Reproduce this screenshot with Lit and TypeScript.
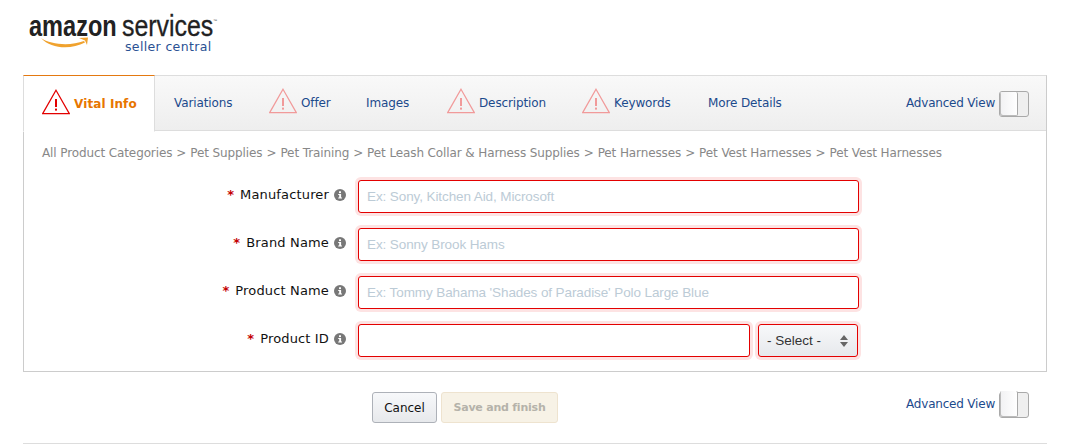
import { LitElement, html, css, svg } from "lit";
import { customElement } from "lit/decorators.js";

const tri = (active: boolean) => html`<svg class="tri" width="28" height="26" viewBox="0 0 28 26">
  ${svg`<path d="M14 1.2 L27.3 24.6 H0.7 Z" fill="#fff" fill-opacity="${active ? 1 : 0}" stroke="${active ? "#e30000" : "#f19a9a"}" stroke-width="1.2" stroke-linejoin="miter"/>
  <rect x="13" y="10" width="2" height="8" fill="${active ? "#e30000" : "#f19a9a"}"/>
  <rect x="13" y="19.6" width="2" height="2" fill="${active ? "#e30000" : "#f19a9a"}"/>`}
</svg>`;

const info = html`<svg class="info" width="12" height="12" viewBox="0 0 12 12">
  <circle cx="6" cy="6" r="6" fill="#777"/>
  <rect x="5" y="2.3" width="2" height="1.8" fill="#fff"/>
  <path d="M4.2 5h2.9v3.6h.9v1H4.2v-1h1V6h-1z" fill="#fff"/>
</svg>`;

const toggle = html`<span class="toggle"><span class="knob"></span></span>`;

const tabs: [string, boolean, number][] = [
  ["Variations", false, 58],
  ["Offer", true, 28],
  ["Images", false, 44],
  ["Description", true, 66],
  ["Keywords", true, 57],
  ["More Details", false, 73],
];

const crumbs = [
  "All Product Categories",
  "Pet Supplies",
  "Pet Training",
  "Pet Leash Collar & Harness Supplies",
  "Pet Harnesses",
  "Pet Vest Harnesses",
  "Pet Vest Harnesses",
];

@customElement("app-root")
export class AppRoot extends LitElement {
  static styles = css`
    :host {
      display: block;
      width: 1070px;
      height: 444px;
      overflow: hidden;
      background: #fff;
      font-family: "DejaVu Sans", Verdana, sans-serif;
      font-size: 12px;
      box-sizing: border-box;
      padding: 0 23px;
    }
    * { box-sizing: border-box; }
    .logo {
      position: relative;
      height: 75px;
      padding: 11px 0 0 6px;
      width: 200px;
    }
    .logo-top {
      display: flex;
      align-items: baseline;
      height: 30px;
      color: #222;
      font-family: "Liberation Sans", Arial, sans-serif;
      font-size: 30px;
      line-height: 30px;
    }
    .amazon {
      display: inline-block;
      width: 93px;
      font-weight: 700;
      white-space: nowrap;
      transform: scaleX(0.785);
      transform-origin: left;
    }
    .services {
      display: inline-block;
      width: 91px;
      white-space: nowrap;
      transform: scaleX(0.83);
      transform-origin: left;
      -webkit-text-stroke: 0.3px #222;
    }
    .tm { position: absolute; left: 190px; top: 18px; font-size: 4px; color: #444; font-family: "Liberation Sans", sans-serif; }
    .central {
      padding-left: 96px;
      color: #2a5193;
      font-family: "DejaVu Sans", sans-serif;
      font-size: 12.5px;
      line-height: 12px;
      letter-spacing: 0.35px;
      white-space: nowrap;
    }
    .arrow { position: absolute; left: 18px; top: 36px; }
    .panel {
      border: 1px solid #ccc;
      border-top-color: #ddd;
      height: 297px;
    }
    .bar {
      display: flex;
      align-items: center;
      height: 56px;
      margin-top: -1px;
      margin-left: -1px;
      border-top: 1px solid #ddd;
      border-bottom: 1px solid #ddd;
      background: linear-gradient(#f9f9f9, #eee);
      padding-right: 17px;
    }
    .bar .toggle { margin-top: 2px; }
    .tab {
      display: flex;
      align-items: center;
      gap: 4px;
      padding: 0 18.5px;
      color: #1c4a8c;
      white-space: nowrap;
      letter-spacing: -0.12px;
    }
    .tab .tri { flex: none; margin: -4px 0 0; }
    .tab.active {
      align-self: stretch;
      height: 57px;
      margin: -1px 0.5px -1px 0;
      background: #fff;
      width: 132px;
      padding: 0 0 0 18px;
      color: #e77600;
      font-weight: 700;
      letter-spacing: 0.1px;
      border-top: 1px solid #e47911;
      border-left: 1px solid #ddd;
      border-right: 1px solid #ddd;
      border-bottom: 1px solid #fff;
    }
    .spacer { flex: 1; }
    .adv { display: flex; align-items: center; gap: 4px; color: #1c4a8c; white-space: nowrap; letter-spacing: -0.2px; }
    .toggle {
      display: inline-block;
      width: 30px;
      height: 26px;
      border: 1px solid #a9a9a9;
      border-radius: 3px;
      background: #efefef;
      position: relative;
    }
    .knob {
      position: absolute;
      left: 0; top: 0; bottom: 0;
      width: 18px;
      background: linear-gradient(90deg, #f1f1f3, #fff);
      border-right: 1px solid #a9a9a9;
      border-radius: 2px;
      box-shadow: inset 1px -1px 0 #bbb;
    }
    .crumbs {
      padding: 0 0 0 18px;
      height: 43px;
      display: flex;
      align-items: center;
      color: #888;
      gap: 4px;
      white-space: nowrap;
      letter-spacing: -0.11px;
    }
    .form { display: flex; flex-direction: column; gap: 15px; padding-top: 6px; }
    .row { display: flex; align-items: center; height: 33px; }
    .label-wrap { display: flex; align-items: center; width: 322px; }
    .label {
      width: 305px;
      display: flex;
      justify-content: flex-end;
      gap: 6px;
      color: #111;
      font-size: 13px;
      letter-spacing: 0.15px;
      white-space: nowrap;
      margin-top: -4px;
    }
    .star { color: #c40000; font-weight: 700; }
    .info { margin: -3px 0 0 5px; flex: none; }
    .field {
      margin-left: 12px;
      width: 501px;
      height: 33px;
      border: 1px solid #e30000;
      border-radius: 3px;
      box-shadow: 0 0 0 3px #fde3e3;
      background: #fff;
      color: #bccbd6;
      font-family: "Liberation Sans", Arial, sans-serif;
      font-size: 13.5px;
      letter-spacing: -0.1px;
      line-height: 31px;
      padding: 0 8px;
      white-space: nowrap;
      overflow: hidden;
    }
    .field.short { width: 392px; }
    .select {
      margin-left: 8px;
      width: 100px;
      height: 33px;
      border: 1px solid #e30000;
      border-radius: 3px;
      box-shadow: 0 0 0 3px #fde3e3;
      background: linear-gradient(#f7f8fa, #e7e9ec);
      color: #333;
      font-family: "Liberation Sans", Arial, sans-serif;
      font-size: 13.5px;
      display: flex;
      align-items: center;
      justify-content: space-between;
      padding: 0 9px 0 8px;
    }
    .actions {
      height: 72px;
      border-bottom: 1px solid #ddd;
      display: flex;
      align-items: flex-start;
      padding-top: 20px;
    }
    .btn {
      height: 31px;
      border-radius: 3px;
      display: flex;
      align-items: center;
      justify-content: center;
      white-space: nowrap;
    }
    .cancel {
      margin-left: 349px;
      width: 65px;
      border: 1px solid #adb1b8;
      background: linear-gradient(#f7f8fa, #e7e9ec);
      color: #111;
    }
    .save {
      margin-left: 4px;
      width: 117px;
      border: 1px solid #eee3cf;
      background: #f7f2e6;
      color: #b5b2aa;
      font-weight: 700;
      font-size: 11px;
      letter-spacing: -0.22px;
    }
    .actions .adv { margin-left: auto; margin-right: 18px; }
    .actions .adv span:first-child { margin-top: -2px; }
  `;

  render() {
    return html`
      <div class="logo">
        <div class="logo-top">
          <span class="amazon">amazon</span><span class="services">services</span>
        </div>
        <span class="tm">™</span>
        <div class="central">seller central</div>
        <svg class="arrow" width="48" height="14" viewBox="0 0 48 14">
          <path d="M0 2C10 9 30 10 43 5L44 6.5C30 14 10 13 0 2Z" fill="#f0a22e"/>
          <path d="M38 2L47 1.5L46 9L44 4.5Z" fill="#f0a22e"/>
        </svg>
      </div>
      <div class="panel">
        <div class="bar">
          <div class="tab active">${tri(true)}<span>Vital Info</span></div>
          ${tabs.map(([t, warn, w]) => html`<div class="tab">${warn ? tri(false) : ""}<span style="width:${w}px">${t}</span></div>`)}
          <div class="spacer"></div>
          <div class="adv"><span>Advanced View</span>${toggle}</div>
        </div>
        <div class="crumbs">
          ${crumbs.map((c, i) => html`${i ? html`<span>&gt;</span>` : ""}<span>${c}</span>`)}
        </div>
        <div class="form">
          ${this.row("Manufacturer", "Ex: Sony, Kitchen Aid, Microsoft")}
          ${this.row("Brand Name", "Ex: Sonny Brook Hams")}
          ${this.row("Product Name", "Ex: Tommy Bahama 'Shades of Paradise' Polo Large Blue")}
          <div class="row">
            ${this.label("Product ID")}
            <div class="field short"></div>
            <div class="select">
              <span>- Select -</span>
              <svg width="8" height="12" viewBox="0 0 8 12"><path d="M4 0 8 5H0ZM4 12 0 7H8Z" fill="#666"/></svg>
            </div>
          </div>
        </div>
      </div>
      <div class="actions">
        <div class="btn cancel">Cancel</div>
        <div class="btn save">Save and finish</div>
        <div class="adv"><span>Advanced View</span>${toggle}</div>
      </div>
    `;
  }

  label(t: string) {
    return html`<div class="label-wrap">
      <div class="label"><span class="star">*</span><span>${t}</span></div>
      ${info}
    </div>`;
  }

  row(t: string, ph: string) {
    return html`<div class="row">${this.label(t)}<div class="field">${ph}</div></div>`;
  }
}
